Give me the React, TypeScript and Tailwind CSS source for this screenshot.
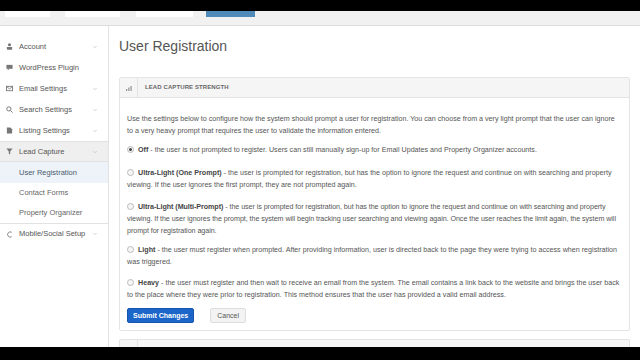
import { ChevronDown } from 'lucide-react';

const font = { fontFamily: '"Liberation Sans", Arial, sans-serif' };

function IconUser() {
    return (
        <svg width="7" height="7" viewBox="0 0 8 8" fill="#777">
            <circle cx="4" cy="2" r="1.8" />
            <rect x="1" y="4.6" width="6" height="3" rx="0.5" />
        </svg>
    );
}
function IconChat() {
    return (
        <svg width="7" height="7" viewBox="0 0 8 8" fill="#777">
            <rect x="0.5" y="1" width="7" height="4.5" />
            <path d="M2 5.5 L2 7.5 L4 5.5Z" />
        </svg>
    );
}
function IconMail() {
    return (
        <svg width="7" height="7" viewBox="0 0 8 8" fill="none" stroke="#777" strokeWidth="1">
            <rect x="0.5" y="1.5" width="7" height="5" />
            <path d="M0.5 1.5 L4 4.5 L7.5 1.5" />
        </svg>
    );
}
function IconSearch() {
    return (
        <svg width="7" height="7" viewBox="0 0 8 8" fill="none" stroke="#777" strokeWidth="1.1">
            <circle cx="3.3" cy="3.3" r="2.4" />
            <path d="M5 5 L7.5 7.5" />
        </svg>
    );
}
function IconFile() {
    return (
        <svg width="7" height="7" viewBox="0 0 8 8" fill="#777">
            <path d="M1 0.5 H5 L7 2.5 V7.5 H1Z" />
        </svg>
    );
}
function IconFilter() {
    return (
        <svg width="7" height="7" viewBox="0 0 8 8" fill="#777">
            <path d="M0.5 0.5 H7.5 L4.8 4 V7.5 L3.2 6.5 V4Z" />
        </svg>
    );
}
function IconPhone() {
    return (
        <svg width="7" height="7" viewBox="0 0 8 8" fill="none" stroke="#777" strokeWidth="1">
            <path d="M6.5 1.5 A3 3 0 1 0 6.5 6.5" />
        </svg>
    );
}

const menu = [
    { name: 'Account', icon: IconUser, chevron: true },
    { name: 'WordPress Plugin', icon: IconChat, chevron: false },
    { name: 'Email Settings', icon: IconMail, chevron: true },
    { name: 'Search Settings', icon: IconSearch, chevron: true },
    { name: 'Listing Settings', icon: IconFile, chevron: true },
];

// spacing above each option differs a little in the screenshot
const options = [
    {
        title: 'Off',
        text: ' - the user is not prompted to register. Users can still manually sign-up for Email Updates and Property Organizer accounts.',
        checked: true,
        cls: 'mt-[7px]',
    },
    {
        title: 'Ultra-Light (One Prompt)',
        text: ' - the user is prompted for registration, but has the option to ignore the request and continue on with searching and property viewing. If the user ignores the first prompt, they are not prompted again.',
        cls: 'mt-[11px]',
    },
    {
        title: 'Ultra-Light (Multi-Prompt)',
        text: ' - the user is prompted for registration, but has the option to ignore the request and continue on with searching and property viewing. If the user ignores the prompt, the system will begin tracking user searching and viewing again. Once the user reaches the limit again, the system will prompt for registration again.',
        cls: 'mt-[10px] tracking-[-0.06px]',
    },
    {
        title: 'Light',
        text: ' - the user must register when prompted. After providing information, user is directed back to the page they were trying to access when registration was triggered.',
        cls: 'mt-[7px]',
    },
    {
        title: 'Heavy',
        text: ' - the user must register and then wait to receive an email from the system. The email contains a link back to the website and brings the user back to the place where they were prior to registration. This method ensures that the user has provided a valid email address.',
        cls: 'mt-[9px]',
    },
];

function Radio({ checked }: { checked?: boolean }) {
    return (
        <span className="inline-flex w-[7px] h-[7px] rounded-full border border-[#bbb] bg-[#f6f6f6] items-center justify-center align-middle mr-[4px] -mt-[2px]">
            {checked && <span className="w-[3px] h-[3px] rounded-full bg-[#444]" />}
        </span>
    );
}

export default function App() {
    return (
        <div className="w-[640px] h-[360px] overflow-hidden flex flex-col bg-white text-[#555]" style={font}>
            <div className="h-[11px] bg-black shrink-0" />
            <div className="h-[15px] shrink-0 bg-[#f1f1f1] border-b border-[#dcdcdc] flex items-start">
                <div className="ml-[5px] w-[45px] h-[6px] bg-white" />
                <div className="ml-[15px] w-[55px] h-[6px] bg-white" />
                <div className="ml-[16px] w-[57px] h-[6px] bg-white" />
                <div className="ml-[13px] w-[49px] h-[6px] bg-[#4f8ab8]" />
            </div>
            <div className="flex flex-1 min-h-0">
                <aside className="w-[109px] shrink-0 border-r border-[#e2e2e2] pt-[10px] text-[7.5px] text-[#555]">
                    {menu.map((m) => (
                        <div key={m.name} className="h-[21px] flex items-center pl-[6px] pr-[10px]">
                            <span className="w-[13px] flex"><m.icon /></span>
                            <span className="flex-1">{m.name}</span>
                            {m.chevron && <ChevronDown className="w-[6px] h-[6px] text-[#aaa]" />}
                        </div>
                    ))}
                    <div className="h-[21px] flex items-center pl-[6px] pr-[10px] bg-[#efefef] border-y border-[#e2e2e2]">
                        <span className="w-[13px] flex"><IconFilter /></span>
                        <span className="flex-1">Lead Capture</span>
                        <ChevronDown className="w-[6px] h-[6px] text-[#aaa]" />
                    </div>
                    <div className="h-[21px] flex items-center pl-[19px] bg-[#eef3f9] text-[#4a5a70]">User Registration</div>
                    <div className="h-[20px] flex items-center pl-[19px] text-[#666]">Contact Forms</div>
                    <div className="h-[20px] flex items-center pl-[19px] text-[#666]">Property Organizer</div>
                    <div className="h-[21px] flex items-center pl-[6px] pr-[10px] border-t border-[#e2e2e2]">
                        <span className="w-[13px] flex"><IconPhone /></span>
                        <span className="flex-1">Mobile/Social Setup</span>
                        <ChevronDown className="w-[6px] h-[6px] text-[#aaa]" />
                    </div>
                </aside>
                <main className="flex-1 pl-[10px] pr-[10px] pt-[11px]">
                    <h1 className="text-[14px] leading-[18px] text-[#555] font-light">User Registration</h1>
                    <div className="mt-[22px] border border-[#e4e4e4] rounded-[2px]">
                        <div className="h-[20px] bg-[#f5f5f5] border-b border-[#e4e4e4] flex items-center">
                            <div className="w-[18px] h-full border-r border-[#e4e4e4] flex items-center justify-center">
                                <svg width="6" height="6" viewBox="0 0 6 6" fill="#999">
                                    <rect x="0" y="4" width="1.3" height="2" />
                                    <rect x="2.2" y="2.5" width="1.3" height="3.5" />
                                    <rect x="4.4" y="1" width="1.3" height="5" />
                                </svg>
                            </div>
                            <span className="ml-[7px] text-[6px] font-bold text-[#666] tracking-[0.1px]">LEAD CAPTURE STRENGTH</span>
                        </div>
                        <div className="px-[7px] pt-[15px] pb-[7px] text-[7.15px] leading-[12px] text-[#555]">
                            <p>
                                Use the settings below to configure how the system should prompt a user for registration. You can choose from a very light prompt that the user can ignore to a very heavy prompt that requires the user to validate the information entered.
                            </p>
                            {options.map((o) => (
                                <p key={o.title} className={o.cls}>
                                    <Radio checked={o.checked} />
                                    <b className="text-[#444]">{o.title}</b>
                                    {o.text}
                                </p>
                            ))}
                            <div className="mt-[7px] flex gap-[16px]">
                                <button className="h-[15px] px-[5px] rounded-[2px] bg-[#1c66c9] border border-[#1657ad] text-white text-[7px] font-bold">
                                    Submit Changes
                                </button>
                                <button className="h-[15px] px-[6px] rounded-[2px] bg-[#f3f3f3] border border-[#ddd] text-[#555] text-[7px]">
                                    Cancel
                                </button>
                            </div>
                        </div>
                    </div>
                    <div className="mt-[8px] border border-[#e4e4e4] rounded-[2px] h-[20px] bg-[#f5f5f5] flex items-center">
                        <div className="w-[18px] h-full border-r border-[#e4e4e4]" />
                        <span className="ml-[7px] text-[6px] font-bold text-[#666]">REGISTRATION TRIGGER POINTS</span>
                    </div>
                </main>
            </div>
            <div className="h-[13px] bg-black shrink-0" />
        </div>
    );
}
